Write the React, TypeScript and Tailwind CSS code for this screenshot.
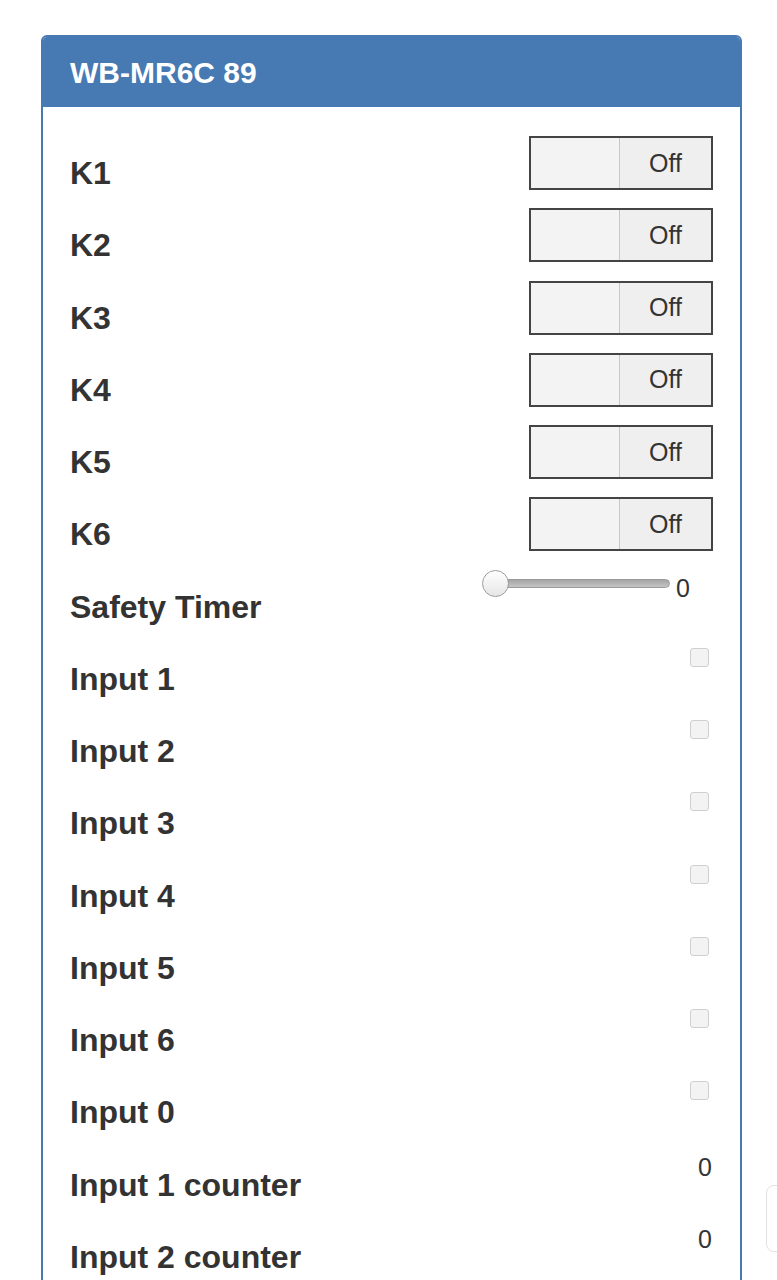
import React from 'react';

const font = { fontFamily: '"Liberation Sans", Arial, sans-serif' };

const Switch: React.FC = () => (
  <div className="mt-[8px] flex h-[54px] w-[184px] border-2 border-[#444] bg-[#f3f3f3]">
    <div className="w-[89px] border-r border-[#c8c8c8]" />
    <div className="flex flex-1 items-center justify-center bg-[#efefef] text-[25px] leading-none text-[#333]">Off</div>
  </div>
);

const Slider: React.FC = () => (
  <div className="mt-[8.5px] mr-[23px] flex items-start">
    <div className="relative h-[27px] w-[188px]">
      <div className="absolute left-[8px] right-0 top-[9px] h-[9px] rounded-full border border-[#9a9a9a] bg-gradient-to-b from-[#a5a5a5] to-[#c4c4c4]" />
      <div className="absolute left-0 top-0 h-[27px] w-[27px] rounded-full border-[1.5px] border-[#9c9c9c] bg-gradient-to-b from-[#ffffff] to-[#e6e6e6]" />
    </div>
    <span className="ml-[6px] mt-[3px] text-[25px] leading-[30px] text-[#333]">0</span>
  </div>
);

const Check: React.FC = () => (
  <div className="mr-[4px] mt-[14px] h-[19px] w-[19px] rounded-[3px] border border-[#cfcfcf] bg-[#f3f3f3]" />
);

const Counter: React.FC = () => (
  <span className="mr-[1px] mt-[12px] text-[25px] leading-[30px] text-[#333]">0</span>
);

type Row = { label: string; kind: 'switch' | 'slider' | 'check' | 'counter' };

const rows: Row[] = [
  { label: 'K1', kind: 'switch' },
  { label: 'K2', kind: 'switch' },
  { label: 'K3', kind: 'switch' },
  { label: 'K4', kind: 'switch' },
  { label: 'K5', kind: 'switch' },
  { label: 'K6', kind: 'switch' },
  { label: 'Safety Timer', kind: 'slider' },
  { label: 'Input 1', kind: 'check' },
  { label: 'Input 2', kind: 'check' },
  { label: 'Input 3', kind: 'check' },
  { label: 'Input 4', kind: 'check' },
  { label: 'Input 5', kind: 'check' },
  { label: 'Input 6', kind: 'check' },
  { label: 'Input 0', kind: 'check' },
  { label: 'Input 1 counter', kind: 'counter' },
  { label: 'Input 2 counter', kind: 'counter' },
];

const App: React.FC = () => {
  return (
    <div className="h-[1280px] w-[777px] overflow-hidden bg-white" style={font}>
      <div className="flex items-start pl-[41px] pt-[35px]">
        {/* Device panel */}
        <div className="w-[701px] shrink-0 overflow-hidden rounded-[6px] border-2 border-[#4779b3] bg-white">
          <div className="flex h-[70px] items-center bg-[#4779b3] px-[27px]">
            <h3 className="text-[30px] font-bold text-white">WB-MR6C 89</h3>
          </div>
          <div className="px-[27px] pt-[21px] pb-[20px]">
            {rows.map((r) => (
              <div key={r.label} className="flex h-[72.25px] items-start justify-between">
                <span className="pt-[27px] text-[32px] font-bold leading-[36px] text-[#333]">{r.label}</span>
                {r.kind === 'switch' && <Switch />}
                {r.kind === 'slider' && <Slider />}
                {r.kind === 'check' && <Check />}
                {r.kind === 'counter' && <Counter />}
              </div>
            ))}
          </div>
        </div>

        {/* Next panel peeking in from the right */}
        <div className="ml-[24px] mt-[1150px] h-[67px] w-[300px] shrink-0 rounded-[8px] border border-[#e2e2e2] bg-white" />
      </div>
    </div>
  );
};

export default App;
